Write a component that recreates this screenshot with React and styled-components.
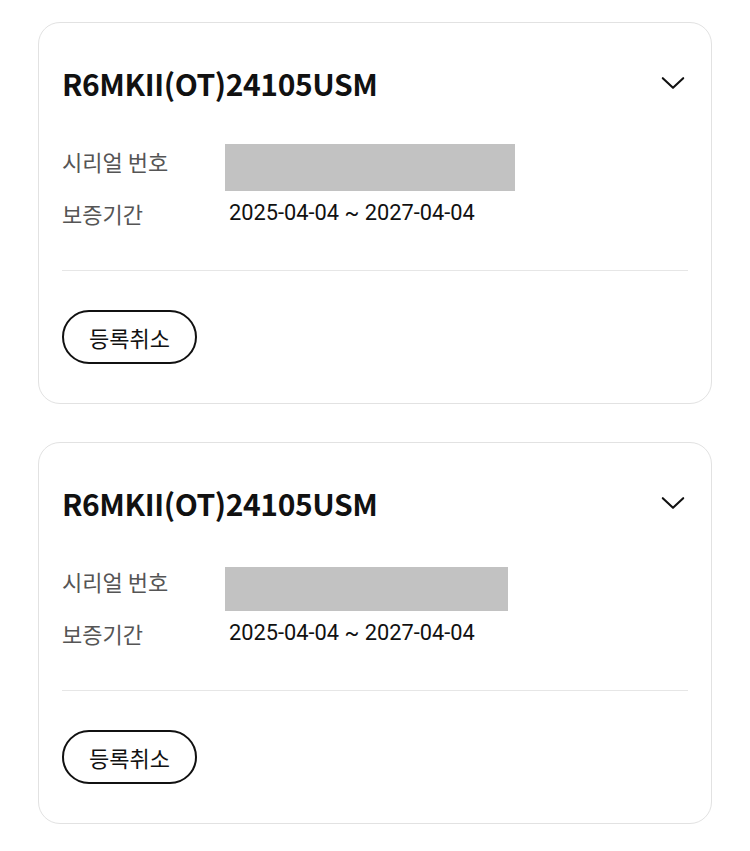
import React from "react";
import styled, { createGlobalStyle } from "styled-components";

const Global = createGlobalStyle`
  html, body { margin: 0; padding: 0; background: #fff; }
  body { font-family: Roboto, "Noto Sans CJK KR", sans-serif; color: #111; }
`;

const Page = styled.div`
  display: flex;
  flex-direction: column;
  gap: 38px;
  padding: 22px 38px;
`;

const Card = styled.section`
  border: 1.5px solid #e2e2e2;
  border-radius: 22px;
  padding: 40px 23px 39px;
  background: #fff;
`;

const Header = styled.div`
  display: flex;
  align-items: center;
  justify-content: space-between;
`;

const Title = styled.h2`
  margin: 0;
  font-family: "Noto Sans CJK KR", sans-serif;
  font-weight: 700;
  font-size: 30px;
  line-height: 40px;
  letter-spacing: -0.4px;
  color: #111;
`;

const ChevronBtn = styled.button`
  border: 0;
  background: none;
  padding: 0;
  margin-right: 2px;
  width: 26px;
  height: 26px;
  display: flex;
  align-items: center;
  justify-content: center;
  cursor: pointer;
`;

const Info = styled.dl`
  margin: 41px 0 0;
  display: flex;
  flex-direction: column;
  gap: 6px;
`;

const Row = styled.div`
  display: grid;
  grid-template-columns: 163px 1fr;
  align-items: start;
`;

const Label = styled.dt`
  font-family: "Noto Sans CJK KR", sans-serif;
  font-size: 22px;
  line-height: 32px;
  color: #555;
  padding-top: ${(p) => p.$offset || 0}px;
`;

const Value = styled.dd`
  margin: 0;
  font-family: Roboto, "Noto Sans CJK KR", sans-serif;
  font-size: 21.8px;
  line-height: 32px;
  color: #111;
  padding-left: 4px;
`;

const Masked = styled.dd`
  margin: ${(p) => p.$mt || 0}px 0 0;
  background: #c2c2c2;
  height: ${(p) => p.$h}px;
  width: ${(p) => p.$w}px;
`;

const Divider = styled.hr`
  margin: 41px 0 39px;
  border: 0;
  border-top: 1.5px solid #e6e6e6;
`;

const OutlineButton = styled.button`
  height: 54px;
  padding: 0 25px;
  border: 2px solid #111;
  border-radius: 27px;
  background: #fff;
  font-family: "Noto Sans CJK KR", sans-serif;
  font-size: 22px;
  color: #111;
  cursor: pointer;
`;

const Chevron = () => (
  <svg width="24" height="14" viewBox="0 0 24 14" fill="none">
    <path d="M1.8 2.2L12 11.8L22.2 2.2" stroke="#111" strokeWidth="2.1" strokeLinecap="round" strokeLinejoin="round" />
  </svg>
);

const items = [
  { name: "R6MKII(OT)24105USM", maskW: 290, maskH: 47, maskTop: 0, period: "2025-04-04 ~ 2027-04-04" },
  { name: "R6MKII(OT)24105USM", maskW: 283, maskH: 44, maskTop: 3, period: "2025-04-04 ~ 2027-04-04" },
];

export default function App() {
  return (
    <>
      <Global />
      <Page>
        {items.map((it, i) => (
          <Card key={i}>
            <Header>
              <Title>{it.name}</Title>
              <ChevronBtn aria-label="펼치기">
                <Chevron />
              </ChevronBtn>
            </Header>
            <Info>
              <Row>
                <Label $offset={1}>시리얼 번호</Label>
                <Masked $w={it.maskW} $h={it.maskH} $mt={it.maskTop} />
              </Row>
              <Row>
                <Label>보증기간</Label>
                <Value>{it.period}</Value>
              </Row>
            </Info>
            <Divider />
            <OutlineButton>등록취소</OutlineButton>
          </Card>
        ))}
      </Page>
    </>
  );
}
